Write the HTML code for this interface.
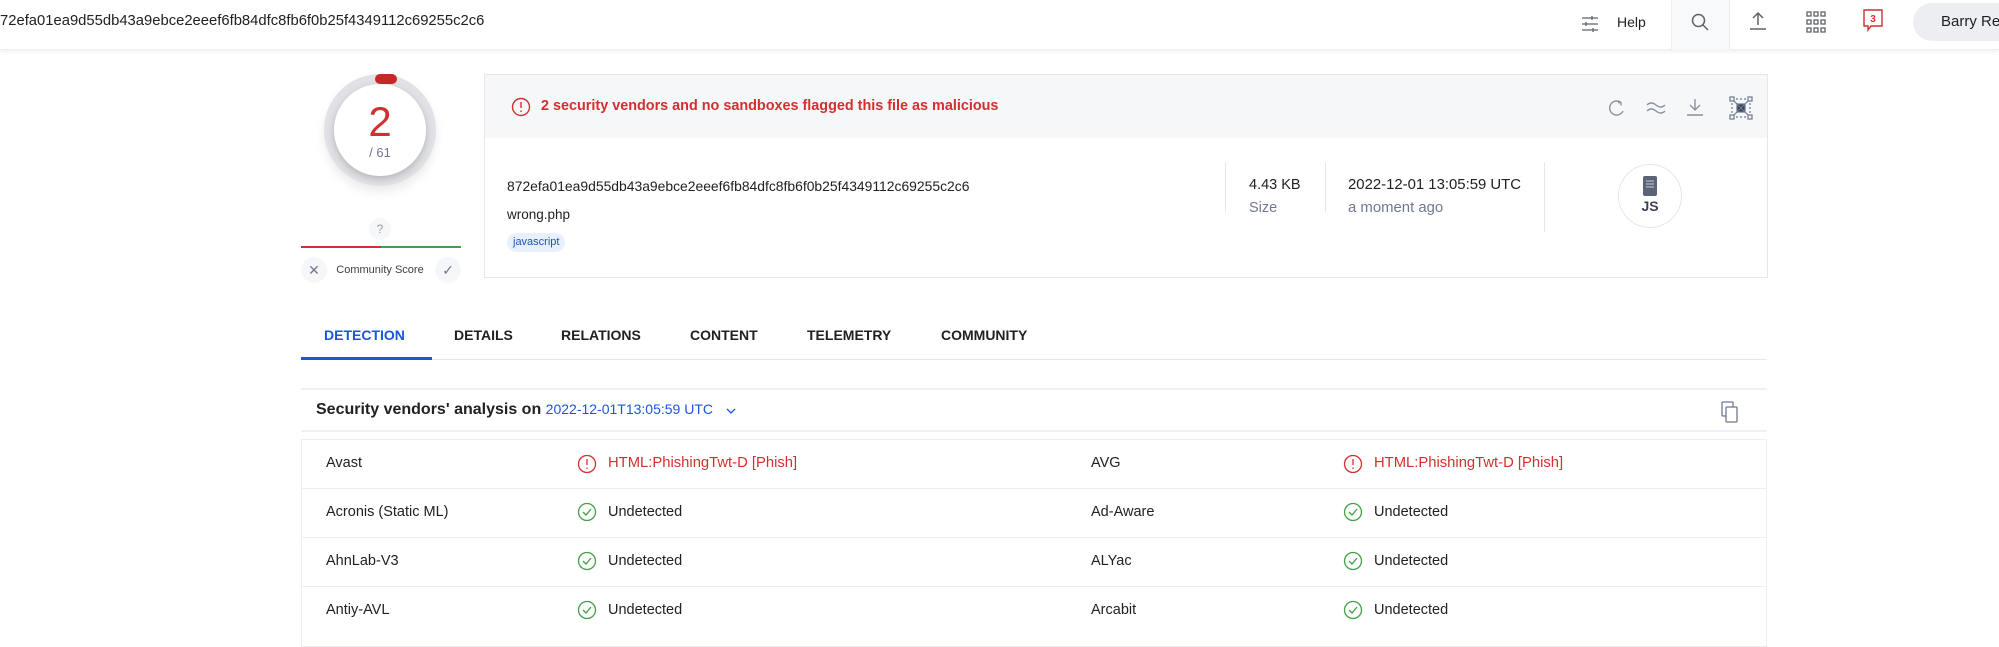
<!DOCTYPE html>
<html><head><meta charset="utf-8"><style>
*{box-sizing:border-box;margin:0;padding:0}
body{width:1999px;height:632px;overflow:hidden;background:#fff;font-family:"Liberation Sans",Arial,sans-serif;color:#202124;position:relative}
.a{position:absolute;white-space:nowrap}
.top{position:absolute;left:0;top:0;width:1999px;height:50px;background:#fff;box-shadow:0 2px 4px rgba(0,0,0,.06);border-bottom:1px solid #eceef2}
svg{position:absolute;overflow:visible}
.row{position:absolute;left:301px;width:1466px;height:49px;border:1px solid #eceef2;border-top:none;font-size:14.5px}
.row span{position:absolute;top:16px}
</style></head><body>
<div class="top"></div>
<div class="a" style="left:0;top:13px;font-size:14.8px">72efa01ea9d55db43a9ebce2eeef6fb84dfc8fb6f0b25f4349112c69255c2c6</div>
<svg style="left:1580px;top:14px" width="20" height="20" viewBox="0 0 20 20" fill="none" stroke="#5f6368" stroke-width="1.3"><path d="M2 4h16M2 10h16M2 16h16M12 2v4M6 8v4M13 14v4"/></svg>
<div class="a" style="left:1617px;top:14px;font-size:14px">Help</div>
<div class="a" style="left:1671px;top:0;width:59px;height:50px;background:#f8f9fb;border-left:1px solid #eceef2;border-right:1px solid #eceef2"></div>
<svg style="left:1690px;top:12px" width="20" height="20" viewBox="0 0 20 20" fill="none" stroke="#5f6368" stroke-width="1.5"><circle cx="8.5" cy="8.5" r="6"/><path d="M13 13l5 5"/></svg>
<svg style="left:1748px;top:11px" width="20" height="20" viewBox="0 0 20 20" fill="none" stroke="#5f6368" stroke-width="1.5"><path d="M10 2v12M5 7l5-5 5 5M2 18h16"/></svg>
<svg style="left:1806px;top:11px" width="20" height="22" viewBox="0 0 20 22" fill="none" stroke="#5f6368" stroke-width="1.3"><rect x="1" y="1" width="4" height="4"/><rect x="8" y="1" width="4" height="4"/><rect x="15" y="1" width="4" height="4"/><rect x="1" y="9" width="4" height="4"/><rect x="8" y="9" width="4" height="4"/><rect x="15" y="9" width="4" height="4"/><rect x="1" y="17" width="4" height="4"/><rect x="8" y="17" width="4" height="4"/><rect x="15" y="17" width="4" height="4"/></svg>
<svg style="left:1862px;top:9px" width="22" height="24" viewBox="0 0 22 24" fill="none" stroke="#d32f2f" stroke-width="1.4"><path d="M2 1h18v16H9l-3 4v-4H2z"/><text x="11" y="13" font-size="10" font-weight="bold" fill="#d32f2f" stroke="none" text-anchor="middle" font-family="Liberation Sans">3</text></svg>
<div class="a" style="left:1913px;top:3px;width:120px;height:38px;border-radius:19px;background:#eceef2"></div>
<div class="a" style="left:1941px;top:13px;font-size:15px">Barry Re</div>

<div class="a" style="left:324px;top:74px;width:112px;height:112px;border-radius:50%;background:#e1e2e6;box-shadow:0 6px 10px rgba(0,0,0,.08)"></div>
<div class="a" style="left:334px;top:84px;width:92px;height:92px;border-radius:50%;background:#fff;box-shadow:0 3px 8px rgba(0,0,0,.2)"></div>
<div class="a" style="left:375px;top:74px;width:22px;height:10px;border-radius:5px;background:#c62828"></div>
<div class="a" style="left:334px;top:98px;width:92px;text-align:center;font-size:42px;color:#d32f2f">2</div>
<div class="a" style="left:334px;top:145px;width:92px;text-align:center;font-size:13px;color:#6f7890">/ 61</div>
<div class="a" style="left:369px;top:218px;width:22px;height:22px;border-radius:50%;background:#f6f7f9;text-align:center;font-size:12px;line-height:22px;color:#9aa0a6">?</div>
<div class="a" style="left:301px;top:246px;width:80px;height:2px;background:#d32f2f"></div>
<div class="a" style="left:381px;top:246px;width:80px;height:2px;background:#43a047"></div>
<div class="a" style="left:301px;top:257px;width:26px;height:26px;border-radius:50%;background:#f6f7f9;text-align:center;line-height:26px;font-size:14px;color:#6f7890">✕</div>
<div class="a" style="left:435px;top:257px;width:26px;height:26px;border-radius:50%;background:#f6f7f9;text-align:center;line-height:26px;font-size:14px;color:#6f7890">✓</div>
<div class="a" style="left:320px;top:264px;width:120px;text-align:center;font-size:11px;color:#3c4043">Community Score</div>

<div class="a" style="left:484px;top:74px;width:1284px;height:204px;border:1px solid #e5e7ec;background:#fff"></div>
<div class="a" style="left:485px;top:75px;width:1282px;height:63px;background:#f6f7f9"></div>
<svg style="left:511px;top:97px" width="20" height="20" viewBox="0 0 20 20" fill="none" stroke="#d32f2f" stroke-width="1.4"><circle cx="10" cy="10" r="8.5"/><path d="M10 5v6M10 13.5v1.5"/></svg>
<div class="a" style="left:541px;top:98px;font-size:14.4px;font-weight:bold;color:#d32f2f">2 security vendors and no sandboxes flagged this file as malicious</div>
<svg style="left:1607px;top:98px" width="20" height="20" viewBox="0 0 20 20" fill="none" stroke="#8a91a3" stroke-width="1.4"><path d="M16 13A7 7 0 1 1 14 4.5M14 4.5l-3 0M14 4.5v3"/></svg>
<svg style="left:1646px;top:100px" width="20" height="16" viewBox="0 0 20 16" fill="none" stroke="#8a91a3" stroke-width="1.4"><path d="M1 5q4-4 9 0t9 0M1 11q4-4 9 0t9 0"/></svg>
<svg style="left:1685px;top:97px" width="20" height="20" viewBox="0 0 20 20" fill="none" stroke="#8a91a3" stroke-width="1.4"><path d="M10 2v11M5 8l5 5 5-5M2 18h16"/></svg>
<svg style="left:1729px;top:96px" width="24" height="24" viewBox="0 0 24 24" fill="none" stroke="#6f7890" stroke-width="1.2"><rect x="1" y="1" width="4" height="4"/><rect x="19" y="1" width="4" height="4"/><rect x="1" y="19" width="4" height="4"/><rect x="19" y="19" width="4" height="4"/><path d="M7 3h10M7 21h10M3 7v10M21 7v10" stroke-dasharray="2 2"/><rect x="8" y="8" width="8" height="8" fill="#3c4254"/><path d="M5 5l14 14M19 5L5 19"/></svg>
<div class="a" style="left:507px;top:178px;font-size:13.9px">872efa01ea9d55db43a9ebce2eeef6fb84dfc8fb6f0b25f4349112c69255c2c6</div>
<div class="a" style="left:507px;top:207px;font-size:13.5px">wrong.php</div>
<div class="a" style="left:507px;top:233px;height:19px;padding:0 6px;border-radius:10px;background:#e8f0fe;color:#1a56b0;font-size:11px;line-height:19px">javascript</div>
<div class="a" style="left:1225px;top:162px;width:1px;height:50px;background:#e5e7ec"></div>
<div class="a" style="left:1325px;top:162px;width:1px;height:50px;background:#e5e7ec"></div>
<div class="a" style="left:1544px;top:162px;width:1px;height:70px;background:#e5e7ec"></div>
<div class="a" style="left:1249px;top:177px;font-size:14.5px">4.43 KB</div>
<div class="a" style="left:1249px;top:200px;font-size:14.5px;color:#6f7890">Size</div>
<div class="a" style="left:1348px;top:177px;font-size:14.9px">2022-12-01 13:05:59 UTC</div>
<div class="a" style="left:1348px;top:200px;font-size:14.9px;color:#6f7890">a moment ago</div>
<div class="a" style="left:1618px;top:164px;width:64px;height:64px;border-radius:50%;border:1px solid #e5e7ec"></div>
<svg style="left:1642px;top:176px" width="16" height="20" viewBox="0 0 16 20"><rect x="1" y="0" width="14" height="20" rx="2" fill="#5b6478"/><path d="M4 5h8M4 8h8M4 11h8" stroke="#c8ccd6" stroke-width="1"/></svg>
<div class="a" style="left:1636px;top:198px;width:28px;text-align:center;font-size:14px;font-weight:bold;color:#3c4254">JS</div>

<div class="a" style="left:324px;top:327px;font-size:14px;font-weight:bold;color:#1a56db">DETECTION</div>
<div class="a" style="left:454px;top:327px;font-size:14px;font-weight:bold">DETAILS</div>
<div class="a" style="left:561px;top:327px;font-size:14px;font-weight:bold">RELATIONS</div>
<div class="a" style="left:690px;top:327px;font-size:14px;font-weight:bold">CONTENT</div>
<div class="a" style="left:807px;top:327px;font-size:14px;font-weight:bold">TELEMETRY</div>
<div class="a" style="left:941px;top:327px;font-size:14px;font-weight:bold">COMMUNITY</div>
<div class="a" style="left:301px;top:359px;width:1466px;height:1px;background:#e5e7ec"></div>
<div class="a" style="left:301px;top:357px;width:131px;height:3px;background:#1a56db"></div>

<div class="a" style="left:301px;top:388px;width:1466px;height:2px;background:#eef0f3"></div>
<div class="a" style="left:301px;top:430px;width:1466px;height:2px;background:#eef0f3"></div>
<div class="a" style="left:316px;top:401px;font-size:16px;font-weight:bold">Security vendors' analysis on <span style="font-weight:normal;font-size:14px;color:#1a56db">2022-12-01T13:05:59 UTC</span></div>
<svg style="left:726px;top:408px" width="10" height="6" viewBox="0 0 10 6" fill="none" stroke="#1a56db" stroke-width="1.3"><path d="M1 1l4 4 4-4"/></svg>
<svg style="left:1721px;top:401px" width="18" height="22" viewBox="0 0 18 22" fill="none" stroke="#6f7890" stroke-width="1.3"><rect x="1" y="1" width="11" height="14" rx="1"/><rect x="5" y="6" width="11" height="15" rx="1" fill="#fff"/></svg>

<div class="row" style="top:439px;border-top:1px solid #eceef2;height:50px"><span style="left:24px;top:15px">Avast</span>
<svg style="left:275px;top:14px" width="20" height="20" viewBox="0 0 20 20" fill="none" stroke="#d32f2f" stroke-width="1.3"><circle cx="10" cy="10" r="8.5"/><path d="M10 5v6M10 13.5v1.5"/></svg>
<span style="left:306px;top:15px;color:#d32f2f;font-size:14.8px">HTML:PhishingTwt-D [Phish]</span><span style="left:789px;top:15px">AVG</span>
<svg style="left:1041px;top:14px" width="20" height="20" viewBox="0 0 20 20" fill="none" stroke="#d32f2f" stroke-width="1.3"><circle cx="10" cy="10" r="8.5"/><path d="M10 5v6M10 13.5v1.5"/></svg>
<span style="left:1072px;top:15px;color:#d32f2f;font-size:14.8px">HTML:PhishingTwt-D [Phish]</span></div>

<div class="row" style="top:489px"><span style="left:24px;top:15px">Acronis (Static ML)</span>
<svg style="left:275px;top:13px" width="20" height="20" viewBox="0 0 20 20" fill="none" stroke="#43a047" stroke-width="1.3"><circle cx="10" cy="10" r="8.5"/><path d="M6 10l3 3 5-6"/></svg>
<span style="left:306px;top:15px">Undetected</span><span style="left:789px;top:15px">Ad-Aware</span>
<svg style="left:1041px;top:13px" width="20" height="20" viewBox="0 0 20 20" fill="none" stroke="#43a047" stroke-width="1.3"><circle cx="10" cy="10" r="8.5"/><path d="M6 10l3 3 5-6"/></svg>
<span style="left:1072px;top:15px">Undetected</span></div>

<div class="row" style="top:538px"><span style="left:24px;top:15px">AhnLab-V3</span>
<svg style="left:275px;top:13px" width="20" height="20" viewBox="0 0 20 20" fill="none" stroke="#43a047" stroke-width="1.3"><circle cx="10" cy="10" r="8.5"/><path d="M6 10l3 3 5-6"/></svg>
<span style="left:306px;top:15px">Undetected</span><span style="left:789px;top:15px">ALYac</span>
<svg style="left:1041px;top:13px" width="20" height="20" viewBox="0 0 20 20" fill="none" stroke="#43a047" stroke-width="1.3"><circle cx="10" cy="10" r="8.5"/><path d="M6 10l3 3 5-6"/></svg>
<span style="left:1072px;top:15px">Undetected</span></div>

<div class="row" style="top:587px;height:60px"><span style="left:24px;top:15px">Antiy-AVL</span>
<svg style="left:275px;top:13px" width="20" height="20" viewBox="0 0 20 20" fill="none" stroke="#43a047" stroke-width="1.3"><circle cx="10" cy="10" r="8.5"/><path d="M6 10l3 3 5-6"/></svg>
<span style="left:306px;top:15px">Undetected</span><span style="left:789px;top:15px">Arcabit</span>
<svg style="left:1041px;top:13px" width="20" height="20" viewBox="0 0 20 20" fill="none" stroke="#43a047" stroke-width="1.3"><circle cx="10" cy="10" r="8.5"/><path d="M6 10l3 3 5-6"/></svg>
<span style="left:1072px;top:15px">Undetected</span></div>
</body></html>
